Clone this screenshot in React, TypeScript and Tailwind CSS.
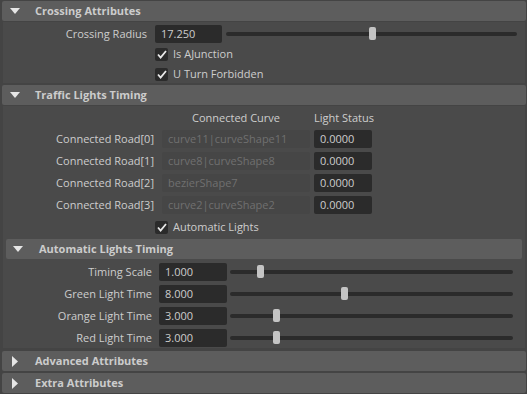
import React from 'react';

const FONT = { fontFamily: '"Open Sans", "Noto Sans", "Liberation Sans", sans-serif' };

// section header bar with a disclosure triangle
const SectionHeader = ({ title, open, nested }: { title: string; open: boolean; nested?: boolean }) => (
  <div
    className={`flex items-center h-[20px] rounded-[2px] bg-[#5d5d5d] ${nested ? 'mx-[3px] pl-[7px]' : 'pl-[8px]'}`}
  >
    <div className="w-[10px] flex justify-start">
      {open ? (
        <svg width="10" height="6" viewBox="0 0 10 6">
          <path d="M0 0h10L5 6z" fill="#e6e6e6" />
        </svg>
      ) : (
        <svg width="6" height="11" viewBox="0 0 6 11" className="ml-[2px]">
          <path d="M0 0l6 5.5L0 11z" fill="#e6e6e6" />
        </svg>
      )}
    </div>
    <span className={`${nested ? 'ml-[16px]' : 'ml-[15px]'} text-[11px] font-bold whitespace-nowrap text-[#cccccc]`}>{title}</span>
  </div>
);

const Field = ({ value, width, disabled }: { value: string; width: number; disabled?: boolean }) => (
  <div
    className={`h-[18px] rounded-[2px] pl-[6px] flex items-center text-[11px] whitespace-nowrap ${disabled ? 'bg-[#464646] text-[#707070]' : 'bg-[#2b2b2b] text-[#cdcdcd]'}`}
    style={{ width }}
  >
    {value}
  </div>
);

const Slider = ({ width, thumb }: { width: number; thumb: number }) => (
  <div className="relative h-[18px] flex items-center" style={{ width }}>
    <div className="w-full h-[4px] rounded-full bg-[#2b2b2b]" />
    <div className="absolute top-[2px] w-[7px] h-[13px] rounded-[2px] bg-[#c4c4c4]" style={{ left: thumb }} />
  </div>
);

const Check = ({ label }: { label: string }) => (
  <div className="flex items-center h-[20px]">
    <div className="w-[13px] h-[13px] rounded-[2px] bg-[#2b2b2b] flex items-center justify-center">
      <svg width="10" height="9" viewBox="0 0 10 9">
        <path d="M1 4.5l2.6 3L9 1" fill="none" stroke="#e8e8e8" strokeWidth="1.8" />
      </svg>
    </div>
    <span className="ml-[5px] text-[11px] whitespace-nowrap text-[#cdcdcd]">{label}</span>
  </div>
);

const roads = [
  ['Connected Road[0]', 'curve11|curveShape11'],
  ['Connected Road[1]', 'curve8|curveShape8'],
  ['Connected Road[2]', 'bezierShape7'],
  ['Connected Road[3]', 'curve2|curveShape2'],
];

const timing = [
  ['Timing Scale', '1.000', 27],
  ['Green Light Time', '8.000', 111],
  ['Orange Light Time', '3.000', 43],
  ['Red Light Time', '3.000', 43],
] as const;

export default function App() {
  return (
    <div className="w-[527px] h-[394px] bg-[#444444] overflow-hidden pt-[1px] pl-[2px] pr-[1px]" style={FONT}>
      <SectionHeader title="Crossing Attributes" open />
      <div className="mx-[1px] mt-[1px] h-[61px] bg-[#4a4a4a] pt-[3px]">
        <div className="flex items-center h-[18px]">
          <div className="w-[144px] text-right text-[11px] whitespace-nowrap text-[#cdcdcd]">Crossing Radius</div>
          <div className="ml-[8px]"><Field value="17.250" width={67} /></div>
          <div className="ml-[4px]"><Slider width={291} thumb={143} /></div>
        </div>
        <div className="pl-[152px] mt-[1px]">
          <Check label="Is AJunction" />
          <Check label="U Turn Forbidden" />
        </div>
      </div>

      <div className="mt-[2px]">
        <SectionHeader title="Traffic Lights Timing" open />
      </div>
      <div className="mx-[1px] mt-[1px] h-[242px] bg-[#4a4a4a]">
        <div className="flex h-[24px] items-center pt-[1px] text-[11px] whitespace-nowrap text-[#cdcdcd]">
          <div className="w-[159px]" />
          <div className="w-[148px] text-center">Connected Curve</div>
          <div className="w-[4px]" />
          <div className="w-[58px] text-center">Light Status</div>
        </div>
        <div className="flex flex-col gap-[4px]">
          {roads.map(([label, curve]) => (
            <div key={label} className="flex items-center h-[18px]">
              <div className="w-[151px] text-right text-[11px] whitespace-nowrap text-[#cdcdcd]">{label}</div>
              <div className="ml-[8px]"><Field value={curve} width={148} disabled /></div>
              <div className="ml-[4px]"><Field value="0.0000" width={58} /></div>
            </div>
          ))}
        </div>
        <div className="pl-[152px] mt-[3px]">
          <Check label="Automatic Lights" />
        </div>
        <div className="mt-[2px]">
          <SectionHeader title="Automatic Lights Timing" open nested />
        </div>
        <div className="flex flex-col gap-[4px] mt-[4px]">
          {timing.map(([label, value, thumb]) => (
            <div key={label} className="flex items-center h-[18px]">
              <div className="w-[149px] text-right text-[11px] whitespace-nowrap text-[#cdcdcd]">{label}</div>
              <div className="ml-[7px]"><Field value={value} width={68} /></div>
              <div className="ml-[3px]"><Slider width={283} thumb={thumb} /></div>
            </div>
          ))}
        </div>
      </div>

      <div className="mt-[3px]">
        <SectionHeader title="Advanced Attributes" open={false} />
      </div>
      <div className="mt-[2px]">
        <SectionHeader title="Extra Attributes" open={false} />
      </div>
    </div>
  );
}
